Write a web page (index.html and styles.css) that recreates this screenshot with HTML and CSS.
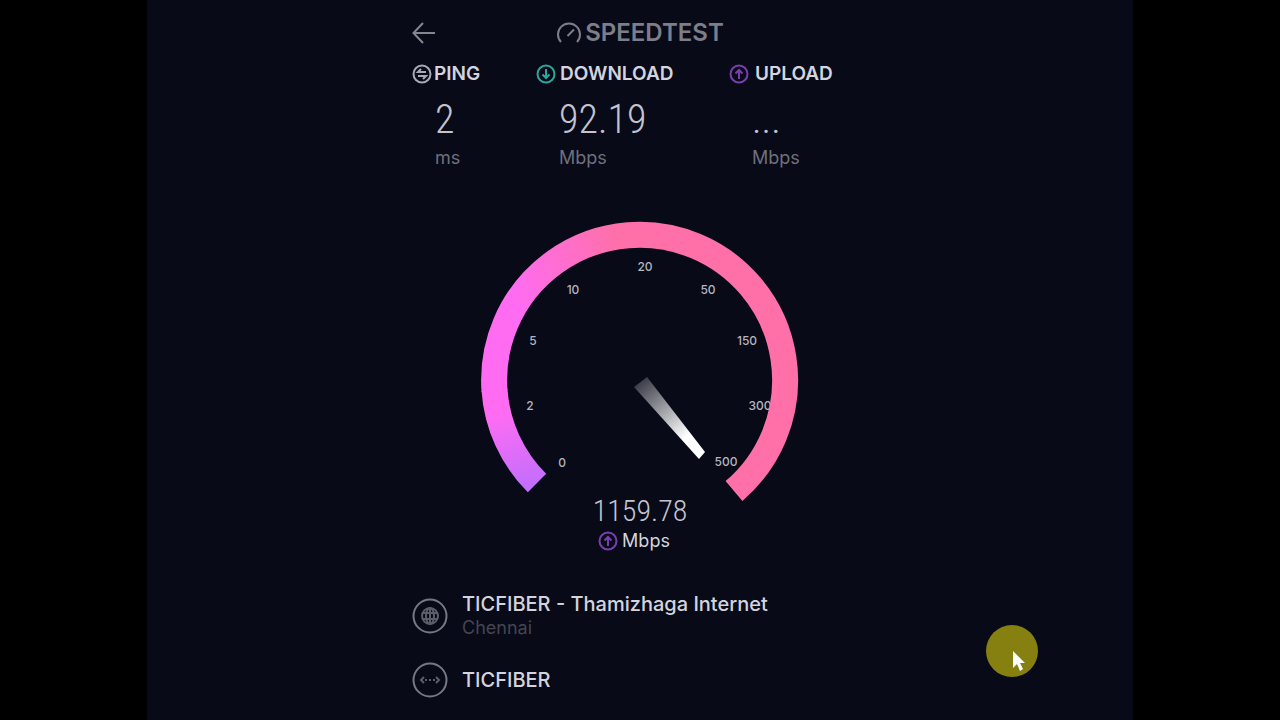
FILE: index.html
```html
<!DOCTYPE html>
<html lang="en">
<head>
  <meta charset="UTF-8">
  <meta name="viewport" content="width=device-width, initial-scale=1.0">
  <title>Speedtest</title>
  <link rel="stylesheet" href="styles.css">
</head>
<body>
  <main class="screen">
    <div class="content">
      <header class="topbar">
        <button class="back" type="button" aria-label="Back">
          <svg width="24" height="22" viewBox="0 0 24 22"><path d="M11 1L1.500 11L11 21M1.500 11H23"/></svg>
        </button>
        <h1 class="logo">
          <svg width="26" height="22" viewBox="0 0 26 22"><path d="M5 20A11 11 0 1 1 21 20M11.500 14L18 7.500"/></svg>
          SPEEDTEST
        </h1>
      </header>

      <section class="metrics">
        <div class="metric ping">
          <h2>
            <svg class="icon" viewBox="0 0 20 20"><circle cx="10" cy="10" r="8.500"/><path d="M14 8H6L9 5M6 12H14L11 15"/></svg>
            PING
          </h2>
          <p class="value">2</p>
          <p class="unit">ms</p>
        </div>
        <div class="metric download">
          <h2>
            <svg class="icon" viewBox="0 0 20 20"><circle cx="10" cy="10" r="8.500"/><path d="M10 5V14M6.500 10.500L10 14L13.500 10.500"/></svg>
            DOWNLOAD
          </h2>
          <p class="value">92.19</p>
          <p class="unit">Mbps</p>
        </div>
        <div class="metric upload">
          <h2>
            <svg class="icon" viewBox="0 0 20 20"><circle cx="10" cy="10" r="8.500"/><path d="M10 15V6M6.500 9.500L10 6L13.500 9.500"/></svg>
            UPLOAD
          </h2>
          <p class="value">...</p>
          <p class="unit">Mbps</p>
        </div>
      </section>

      <section class="gauge">
        <svg class="dial" viewBox="0 0 320 282" role="img" aria-label="Speed gauge">
          <defs>
            <linearGradient id="arc" gradientUnits="userSpaceOnUse" x1="30" y1="60" x2="140" y2="20">
              <stop offset="0" stop-color="#ff6cf2"/>
              <stop offset="1" stop-color="#ff70a8"/>
            </linearGradient>
            <linearGradient id="arc-start" gradientUnits="userSpaceOnUse" x1="50" y1="272" x2="30" y2="190">
              <stop offset="0" stop-color="#bd6eff"/>
              <stop offset="1" stop-color="#ff6cf2"/>
            </linearGradient>
            <linearGradient id="needle" gradientUnits="userSpaceOnUse" x1="160" y1="160" x2="222" y2="234">
              <stop offset="0" stop-color="#fff" stop-opacity=".2"/>
              <stop offset=".75" stop-color="#fff"/>
            </linearGradient>
          </defs>
          <g class="ticks">
            <text x="82" y="246">0</text>
            <text x="50" y="189">2</text>
            <text x="53" y="124">5</text>
            <text x="93" y="73">10</text>
            <text x="165" y="50">20</text>
            <text x="228" y="73">50</text>
            <text x="267" y="124">150</text>
            <text x="280" y="189">300</text>
            <text x="246" y="245">500</text>
          </g>
          <path class="arc" stroke="url(#arc)" d="M14.500 170A145.500 145.500 0 1 1 254 270"/>
          <path class="arc" stroke="url(#arc-start)" d="M57 262A145.500 145.500 0 0 1 14.500 169"/>
          <path fill="url(#needle)" d="M154 166L167 156L225 231L219 238Z"/>
        </svg>
        <p class="reading">1159.78</p>
        <p class="reading-unit">
          <svg class="icon" viewBox="0 0 20 20"><circle cx="10" cy="10" r="8.500"/><path d="M10 15V6M6.500 9.500L10 6L13.500 9.500"/></svg>
          Mbps
        </p>
      </section>

      <ul class="connection">
        <li>
          <svg viewBox="0 0 36 36"><circle cx="18" cy="18" r="16.500"/><g class="glyph"><circle cx="18" cy="18" r="8"/><ellipse cx="18" cy="18" rx="4" ry="8"/><path d="M18 10V26M11 15H25M11 21H25"/></g></svg>
          <div>
            <p class="name">TICFIBER - Thamizhaga Internet</p>
            <p class="place">Chennai</p>
          </div>
        </li>
        <li>
          <svg viewBox="0 0 36 36"><circle cx="18" cy="18" r="16.500"/><path class="glyph" d="M12 15L9 18L12 21M24 15L27 18L24 21M13 18H15M17 18H19M21 18H23"/></svg>
          <p class="name">TICFIBER</p>
        </li>
      </ul>
    </div>
  </main>

  <!-- mouse pointer with highlight -->
  <div class="pointer">
    <svg width="52" height="52" viewBox="0 0 52 52"><path d="M27 26V43L31 39L34 46L37 44L34 38H39Z"/></svg>
  </div>
</body>
</html>
```
FILE: styles.css
```css
* {
  box-sizing: border-box;
}

body {
  margin: 0;
  background-color: #000;
  color: #d3d4de;
  font-family: "Inter", "Open Sans", sans-serif;
}

h1, h2, p, ul {
  margin: 0;
  padding: 0;
}

svg {
  display: block;
  flex: none;
  fill: none;
}

.screen {
  width: 77%;
  min-height: 100vh;
  margin: 0 auto;
  padding: 21px 16px;
  background-color: #080a18;
}

.content {
  max-width: 456px;
  margin: 0 auto;
}

/* top bar */
.topbar {
  display: grid;
  grid-template-columns: 24px 1fr 24px;
  align-items: center;
  height: 24px;
}

.back {
  padding: 0;
  border: none;
  background: none;
  cursor: pointer;
}

.back svg {
  stroke: #85868f;
  stroke-width: 2;
}

.logo {
  display: flex;
  justify-content: center;
  align-items: center;
  gap: 3px;
  color: #7d7e89;
  font-size: 24px;
  font-weight: 600;
  line-height: 24px;
}

.logo svg {
  stroke: currentColor;
  stroke-width: 2;
}

/* results */
.metrics {
  display: grid;
  grid-template-columns: 124px 193px 1fr;
  margin-top: 19px;
}

.metric h2 {
  display: flex;
  align-items: center;
  gap: 4px;
  font-size: 19px;
  font-weight: 600;
  line-height: 20px;
}

.icon {
  width: 20px;
  height: 20px;
  stroke: currentColor;
  stroke-width: 2;
}

.ping h2 {
  gap: 2px;
}

.ping .icon {
  stroke: #a9aab5;
}

.upload h2 {
  gap: 6px;
}

.download .icon {
  stroke: #2ba79d;
}

.upload .icon,
.reading-unit .icon {
  stroke: #7a3fae;
}

.value,
.reading {
  color: #c3c4cf;
  font-family: "Liberation Sans Narrow", "Roboto Condensed", "Roboto", sans-serif;
  font-weight: 300;
}

.value {
  padding-left: 23px;
  font-size: 40px;
  line-height: 48px;
  margin-top: 12px;
}

.unit {
  padding-left: 23px;
  margin-top: 4px;
  color: #6f707c;
  font-size: 18px;
  line-height: 20px;
}

/* gauge */
.gauge {
  display: flex;
  flex-direction: column;
  align-items: center;
  margin-top: 53px;
}

.dial {
  width: 100%;
  max-width: 320px;
}

.arc {
  stroke-width: 26;
}

.ticks {
  fill: #b5b6c0;
  font-size: 12px;
  font-weight: 500;
  text-anchor: middle;
}

.reading {
  margin-top: -12px;
  font-size: 30px;
  line-height: 40px;
}

.reading-unit {
  display: flex;
  align-items: center;
  gap: 4px;
  padding-right: 12px;
  font-size: 18px;
  line-height: 20px;
}

/* server and provider */
.connection {
  display: flex;
  flex-direction: column;
  gap: 22px;
  margin-top: 41px;
  list-style: none;
}

.connection li {
  display: flex;
  align-items: center;
  gap: 14px;
}

.connection svg {
  width: 36px;
  height: 36px;
  stroke: #777883;
  stroke-width: 2;
}

.connection .glyph {
  stroke: #5c5d69;
}

.name {
  font-size: 20px;
  font-weight: 500;
  line-height: 24px;
}

.place {
  color: #444552;
  font-size: 18px;
  line-height: 24px;
}

.pointer {
  position: fixed;
  right: 242px;
  bottom: 43px;
  border-radius: 50%;
  background-color: #85800f;
}

.pointer path {
  fill: #fff;
}
```
